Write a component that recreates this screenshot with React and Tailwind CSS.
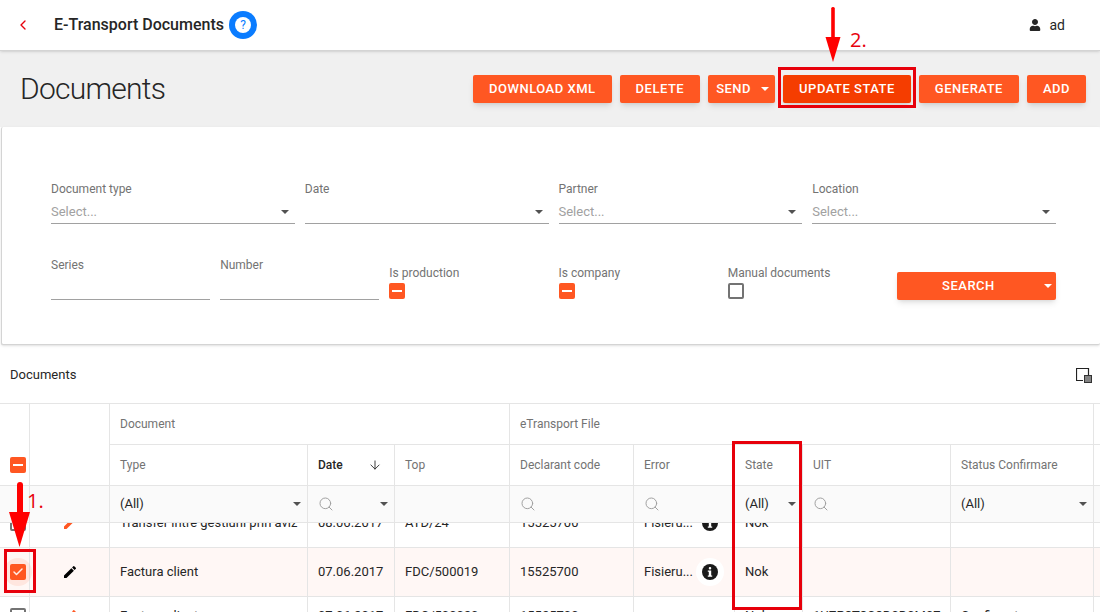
import { ChevronLeft, ArrowDown, Search, Check } from "lucide-react";
import { MdEdit } from "react-icons/md";
import { FaUser } from "react-icons/fa";

const cols = "grid grid-cols-[30px_80px_198px_87px_115px_124px_101px_68px_148px_143px_1fr]";
const base = "flex items-center border-r border-b border-neutral-200 min-w-0";
const cell = `${base} px-2.5`;
const filterCell = `${base} pl-2.5 pr-1.5`;

const Caret = ({ className = "border-t-neutral-600" }) => (
  <span className={`w-0 h-0 border-x-4 border-x-transparent border-t-4 ${className}`} />
);

const Btn = ({ children, dark, caret }) => (
  <button
    className={`h-7 flex items-center gap-2.5 rounded-xs text-white text-[13px] font-medium tracking-[0.5px] shadow-md ${
      dark ? "bg-[#f53d00]" : "bg-[#ff5722]"
    } ${caret ? "pl-2 pr-1.5" : "px-4"}`}
  >
    {children}
    {caret && <Caret className="border-t-white" />}
  </button>
);

const Minus = () => (
  <span className="w-4 h-4 shrink-0 rounded-xs bg-[#ff5722] flex items-center justify-center">
    <span className="w-2.5 h-0.5 bg-white" />
  </span>
);

const Empty = () => <span className="w-4 h-4 shrink-0 rounded-xs border-2 border-neutral-500 bg-white" />;

const SelectField = ({ label, placeholder }) => (
  <div className="flex flex-col">
    <label className="text-xs text-neutral-500">{label}</label>
    <div className="h-5.75 mt-1 flex items-center justify-between border-b border-neutral-400 pr-1.5">
      <span className="text-[13px] text-neutral-400">{placeholder}</span>
      <Caret />
    </div>
  </div>
);

const TextField = ({ label }) => (
  <div className="flex flex-col">
    <label className="text-xs text-neutral-500">{label}</label>
    <div className="h-5.75 mt-1 border-b border-neutral-400" />
  </div>
);

const CheckField = ({ label, children }) => (
  <div className="flex flex-col gap-0.5 pt-2 items-start">
    <label className="text-xs text-neutral-500">{label}</label>
    {children}
  </div>
);

const FilterSearch = ({ caret }) => (
  <div className="flex items-center justify-between w-full">
    <Search size={16} strokeWidth={1.5} className="text-neutral-400" />
    {caret && <Caret />}
  </div>
);

const FilterAll = () => (
  <div className="flex items-center justify-between w-full">
    <span>(All)</span>
    <Caret />
  </div>
);

const HeadCell = ({ children, className = "" }) => (
  <div className={`${cell} h-10.25 text-xs text-neutral-500 ${className}`}>{children}</div>
);

const ErrorInfo = () => (
  <span className="w-7 h-7 rounded-full bg-white flex items-center justify-center shrink-0">
    <svg width="16" height="16" viewBox="0 0 16 16">
      <circle cx="8" cy="8" r="8" fill="#1a1a1a" />
      <rect x="6.8" y="3" width="2.4" height="2.4" rx="1" fill="#fff" />
      <path d="M5.8 6.6h3.4v5h1v1.2H5.8v-1.2h1v-3.8h-1z" fill="#fff" />
    </svg>
  </span>
);

const Row = ({ box, pencil, type, date, top, code, error, state, uit, status, selected, height }) => (
  <div className={`${cols} ${height} ${selected ? "bg-[#fff7f5]" : "bg-white"}`}>
    <div className={`${base} pl-2.5`}>{box}</div>
    <div className={`${base} justify-center`}>
      <MdEdit size={16} className={pencil} />
    </div>
    <div className={`${cell} whitespace-nowrap`}>{type}</div>
    <div className={cell}>{date}</div>
    <div className={cell}>{top}</div>
    <div className={cell}>{code}</div>
    <div className={`${cell} justify-between`}>
      {error && <span>{error}</span>}
      {error && <ErrorInfo />}
    </div>
    <div className={cell}>{state}</div>
    <div className={`${cell} whitespace-nowrap overflow-hidden`}>{uit}</div>
    <div className={cell}>{status}</div>
    <div className={cell} />
  </div>
);

export default function App() {
  return (
    <div className="relative w-full h-screen overflow-hidden bg-white text-neutral-800 font-['Roboto',sans-serif]">
      <header className="relative z-10 h-12.75 flex items-center justify-between bg-white border-b border-neutral-300 shadow-sm pl-3.75 pr-8.75">
        <div className="flex items-center">
          <ChevronLeft size={16} strokeWidth={2} className="text-red-600" />
          <span className="ml-5.75 text-base font-medium">E-Transport Documents</span>
          <span className="ml-1.25 w-7 h-7 rounded-full bg-[#0a7cff] flex items-center justify-center">
            <span className="w-4 h-4 rounded-full bg-white text-[#0a7cff] text-xs flex items-center justify-center">?</span>
          </span>
        </div>
        <div className="flex items-center gap-2 text-sm">
          <FaUser size={12} />
          <span>ad</span>
        </div>
      </header>

      <section className="h-19 flex items-center justify-between bg-[#f0f0f0] pl-5 pr-3.5">
        <h1 className="text-3xl font-light tracking-tight">Documents</h1>
        <div className="flex gap-2">
          <Btn>DOWNLOAD XML</Btn>
          <Btn>DELETE</Btn>
          <Btn caret>SEND</Btn>
          <Btn dark>UPDATE STATE</Btn>
          <Btn>GENERATE</Btn>
          <Btn>ADD</Btn>
        </div>
      </section>

      <section className="ml-px h-54.5 rounded-xs bg-white border-l border-b border-neutral-300 shadow-sm pt-13.5 pl-12.25 pr-11">
        <div className="grid grid-cols-4 gap-2.5">
          <SelectField label="Document type" placeholder="Select..." />
          <SelectField label="Date" />
          <SelectField label="Partner" placeholder="Select..." />
          <SelectField label="Location" placeholder="Select..." />
        </div>
        <div className="grid grid-cols-6 gap-2.5 mt-8.25">
          <TextField label="Series" />
          <TextField label="Number" />
          <CheckField label="Is production"><Minus /></CheckField>
          <CheckField label="Is company"><Minus /></CheckField>
          <CheckField label="Manual documents"><Empty /></CheckField>
          <div className="pt-3.75">
            <button className="relative h-7 w-full rounded-xs bg-[#ff5722] text-white text-[13px] font-medium tracking-[0.5px] shadow-md pr-4">
              SEARCH
              <Caret className="absolute right-1 top-3 border-t-white" />
            </button>
          </div>
        </div>
      </section>

      <div className="h-14.5 pt-0.5 flex items-center justify-between pl-2.5 pr-2 text-[13px]">
        <span>Documents</span>
        <svg width="16" height="16" viewBox="0 0 16 16">
          <path d="M12.5 8V1.5h-12v12H7" fill="none" stroke="#222" strokeWidth="1.2" />
          <rect x="8" y="8" width="8" height="8" fill="#333" />
          <path d="M9 10h6M9 12h6M9 14h6" stroke="#fff" strokeWidth="0.8" />
        </svg>
      </div>

      <div className="border-t border-neutral-200 text-[13px]">
        <div className={`${cols} relative z-10 bg-white`}>
          <div className="flex items-end row-span-2 border-r border-b border-neutral-200 pl-2.5 pb-3"><Minus /></div>
          <div className={`${cell} row-span-2`} />
          <HeadCell className="col-span-3">Document</HeadCell>
          <HeadCell className="col-span-5">eTransport File</HeadCell>
          <div className={cell} />
          <HeadCell>Type</HeadCell>
          <div className={`${base} h-10.25 justify-between pl-2.5 pr-3 text-xs font-medium`}>
            Date <ArrowDown size={14} strokeWidth={1.5} />
          </div>
          <HeadCell>Top</HeadCell>
          <HeadCell>Declarant code</HeadCell>
          <HeadCell>Error</HeadCell>
          <HeadCell>State</HeadCell>
          <HeadCell>UIT</HeadCell>
          <HeadCell>Status Confirmare</HeadCell>
          <div className={cell} />
        </div>
        <div className={`${cols} relative z-10 h-9.25 bg-neutral-50`}>
          <div className={cell} />
          <div className={cell} />
          <div className={filterCell}><FilterAll /></div>
          <div className={filterCell}><FilterSearch caret /></div>
          <div className={cell} />
          <div className={cell}><FilterSearch /></div>
          <div className={cell}><FilterSearch /></div>
          <div className={filterCell}><FilterAll /></div>
          <div className={cell}><FilterSearch /></div>
          <div className={filterCell}><FilterAll /></div>
          <div className={cell} />
        </div>
        <div className="-mt-6">
          <Row
            height="h-12.25"
            box={<Empty />}
            pencil="text-[#ff5722]"
            type="Transfer intre gestiuni prin aviz"
            date="08.06.2017"
            top="ATD/24"
            code="15525700"
            error="Fisieru..."
            state="Nok"
          />
          <Row
            selected
            height="h-12.25"
            box={
              <span className="relative w-4 h-4 shrink-0 rounded-xs bg-[#ff5722] flex items-center justify-center">
                <span className="absolute -inset-1.5 rounded-full bg-[#ff5722]/10" />
                <Check size={12} strokeWidth={3} className="text-white" />
              </span>
            }
            pencil="text-black"
            type="Factura client"
            date="07.06.2017"
            top="FDC/500019"
            code="15525700"
            error="Fisieru..."
            state="Nok"
          />
          <Row
            height="h-9.5"
            box={<Empty />}
            pencil="text-[#ff5722]"
            type="Factura client"
            date="07.06.2017"
            top="FDC/500020"
            code="15525700"
            state="Nok"
            uit="1UZP8T8C8D0D0M07"
            status="Confirmat"
          />
        </div>
      </div>

      {/* annotations */}
      <div className="absolute z-20 left-[778px] top-[67px] w-[138px] h-[41px] border-[3px] border-red-600" />
      <div className="absolute z-20 left-1 top-[549px] w-8 h-11 border-[3px] border-red-600" />
      <div className="absolute z-20 left-[732px] top-[441px] w-[70px] h-[169px] border-[3px] border-red-600" />
      <svg className="absolute z-20 left-[823px] top-[5px]" width="20" height="58" viewBox="0 0 20 58">
        <rect x="8.2" y="2" width="3.6" height="36" rx="1.5" fill="#f00" />
        <path d="M2.5 32h15L10 57z" fill="#f00" />
      </svg>
      <svg className="absolute z-20 left-[9px] top-[480px]" width="22" height="68" viewBox="0 0 22 68">
        <rect x="8" y="2" width="6" height="46" rx="3" fill="#f00" />
        <path d="M0 32h21L10.5 67z" fill="#f00" />
      </svg>
      <span className="absolute z-20 left-[850px] top-[26px] text-xl text-red-600 font-['Open_Sans',sans-serif]">2.</span>
      <span className="absolute z-20 left-[27px] top-[487px] text-xl text-red-600 font-['Open_Sans',sans-serif]">1.</span>
    </div>
  );
}
